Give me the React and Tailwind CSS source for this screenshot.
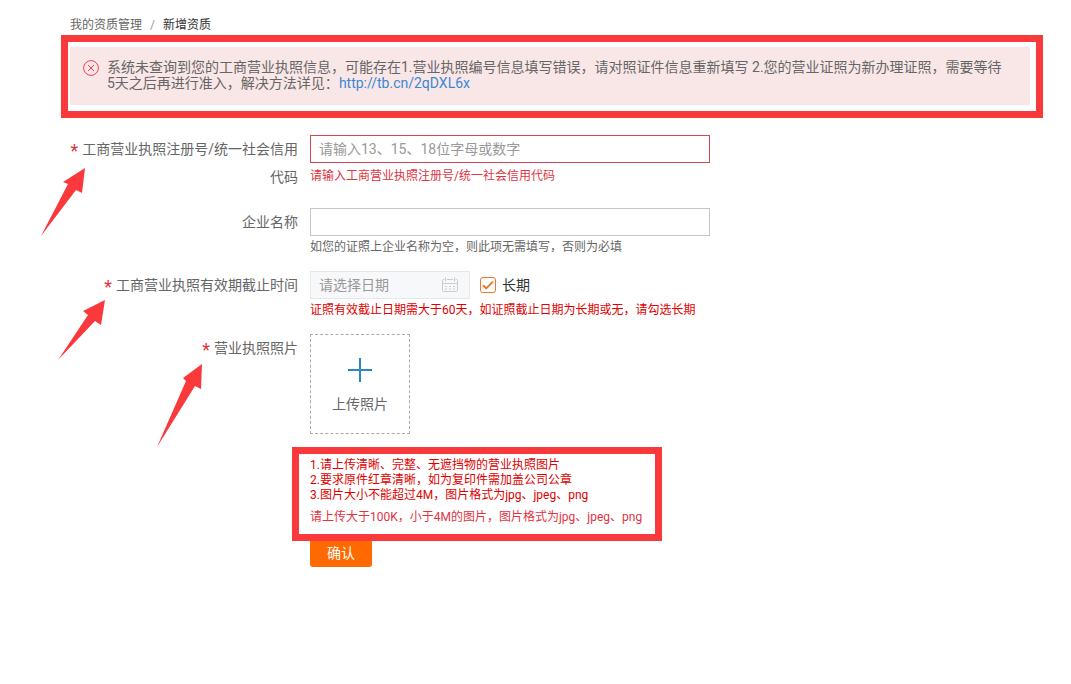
import { useState } from 'react';

function Frame({ className }) {
  return <div aria-hidden="true" className={`pointer-events-none absolute border-[7px] border-[#fa393c] ${className}`} />;
}

function Arrow({ className, points, width, height }) {
  return (
    <svg aria-hidden="true" width={width} height={height} viewBox={`0 0 ${width} ${height}`} className={`pointer-events-none absolute ${className}`}>
      <polygon points={points} fill="#fa393c" />
    </svg>
  );
}

function Label({ htmlFor, required, children }) {
  return (
    <label htmlFor={htmlFor} className="w-60 shrink-0 pr-3 text-right text-sm leading-7">
      {required && <span className="mr-1 align-[-3px] text-lg leading-none text-[#e0343f]">*</span>}
      {children}
    </label>
  );
}

function CalendarIcon() {
  return (
    <svg aria-hidden="true" width="16" height="16" viewBox="0 0 16 16" fill="none" stroke="#cbcbcb" className="pointer-events-none absolute right-3 top-1.5">
      <path d="M2.5 2.5H1.5a1 1 0 0 0-1 1v10a1 1 0 0 0 1 1h13a1 1 0 0 0 1-1v-10a1 1 0 0 0-1-1h-1M5 2.5h6" />
      <path d="M0.5 6.5h15M3.5 0.5v4M12.5 0.5v4" />
      <path d="M3 9.5h2M7 9.5h2M11 9.5h2M3 12h2M7 12h2M11 12h2" />
    </svg>
  );
}

export default function App() {
  const [longTerm, setLongTerm] = useState(true);

  return (
    <main className="pt-[17px] pr-[41px] pl-[70px] font-[Roboto,'Noto_Sans_CJK_SC',sans-serif] text-sm text-[#666]">
      <nav aria-label="导航" className="flex gap-2 text-xs leading-4">
        <a href="#list">我的资质管理</a>
        <span className="text-[#999]">/</span>
        <span className="text-[#333]">新增资质</span>
      </nav>

      <div role="alert" className="relative mt-3.5 flex gap-2 bg-[#f9e7e7] pt-3 pr-6 pb-3.5 pl-[13px]">
        <svg aria-hidden="true" width="16" height="16" viewBox="0 0 16 16" fill="none" stroke="#f0414f" className="mt-px shrink-0">
          <circle cx="8" cy="8" r="7.4" />
          <path d="M5 5l6 6M11 5l-6 6" />
        </svg>
        <p className="leading-4">
          系统未查询到您的工商营业执照信息，可能存在1.营业执照编号信息填写错误，请对照证件信息重新填写 2.您的营业证照为新办理证照，需要等待5天之后再进行准入，解决方法详见：
          <a href="http://tb.cn/2qDXL6x" className="inline-block text-[#3a87d4]">http://tb.cn/2qDXL6x</a>
        </p>
        <Frame className="-top-3 -right-[13px] -bottom-[13px] -left-[9px]" />
      </div>

      <form className="mt-[30px]" onSubmit={(e) => e.preventDefault()}>
        <div className="relative mb-[17px] flex">
          <Label htmlFor="license" required>工商营业执照注册号/统一社会信用代码</Label>
          <div className="min-w-0 grow">
            <input id="license" aria-invalid="true" placeholder="请输入13、15、18位字母或数字" className="block h-7 w-full max-w-[400px] border border-[#d64552] px-2 placeholder:text-[#999]" />
            <p className="pt-px text-xs leading-6 text-[#e0343f]">请输入工商营业执照注册号/统一社会信用代码</p>
          </div>
          <Arrow className="top-8 -left-[30px]" width={46} height={70} points="45,1 23,15 28,17 1,69 36,23 42,26" />
        </div>

        <div className="mb-[17px] flex">
          <Label htmlFor="company">企业名称</Label>
          <div className="min-w-0 grow">
            <input id="company" className="block h-7 w-full max-w-[400px] border border-[#c4c6cc] px-2" />
            <p className="pt-1 text-xs leading-[14px]">如您的证照上企业名称为空，则此项无需填写，否则为必填</p>
          </div>
        </div>

        <div className="relative mb-[17px] flex">
          <Label htmlFor="expiry" required>工商营业执照有效期截止时间</Label>
          <div className="min-w-0 grow">
            <div className="flex items-center gap-2.5">
              <div className="relative">
                <input id="expiry" disabled={longTerm} placeholder="请选择日期" className="block h-7 w-40 border border-[#e6e7eb] bg-[#f7f8fa] px-2 placeholder:text-[#999]" />
                <CalendarIcon />
              </div>
              <label className="relative flex items-center gap-1.5 text-[#333]">
                <input type="checkbox" checked={longTerm} onChange={(e) => setLongTerm(e.target.checked)} className="size-4 appearance-none rounded-[3px] border border-[#f0762b] bg-white" />
                {longTerm && (
                  <svg aria-hidden="true" width="16" height="16" viewBox="0 0 16 16" fill="none" stroke="#f0762b" strokeWidth="2" className="pointer-events-none absolute left-0">
                    <path d="M3 8.2l3.2 3.2L13 4.6" />
                  </svg>
                )}
                长期
              </label>
            </div>
            <p className="pt-1 text-xs leading-[14px] text-[#e00000]">证照有效截止日期需大于60天，如证照截止日期为长期或无，请勾选长期</p>
          </div>
          <Arrow className="top-7 -left-[13px]" width={49} height={62} points="48,1 26,12 31,16 1,61 38,22 44,26" />
        </div>

        <div className="relative flex">
          <Label htmlFor="photo" required>营业执照照片</Label>
          <div className="min-w-0 grow">
            <button id="photo" type="button" className="flex size-[100px] cursor-pointer flex-col items-center gap-3 border border-dashed border-[#aaa] pt-[23px]">
              <svg aria-hidden="true" width="24" height="24" viewBox="0 0 24 24" stroke="#2f86bd" strokeWidth="2">
                <path d="M12 0v24M0 12h24" />
              </svg>
              <span className="leading-5">上传照片</span>
            </button>
            <div className="relative mt-6 w-fit pb-[13px] text-xs">
              <ol className="leading-[15px] text-[#e00000]">
                <li>1.请上传清晰、完整、无遮挡物的营业执照图片</li>
                <li>2.要求原件红章清晰，如为复印件需加盖公司公章</li>
                <li>3.图片大小不能超过4M，图片格式为jpg、jpeg、png</li>
              </ol>
              <p className="mt-[5px] leading-[18px] text-[#e0343f]">请上传大于100K，小于4M的图片，图片格式为jpg、jpeg、png</p>
              <Frame className="-top-[11px] -right-5 -bottom-0.5 -left-[18px] z-10" />
            </div>
            <button type="submit" className="block h-7 w-[62px] cursor-pointer rounded-[3px] bg-[#ff6a00] text-white">确认</button>
          </div>
          <Arrow className="top-[29px] left-[86px]" width={47} height={85} points="46,1 27,15 30,18 1,84 39,23 45,26" />
        </div>
      </form>
    </main>
  );
}
